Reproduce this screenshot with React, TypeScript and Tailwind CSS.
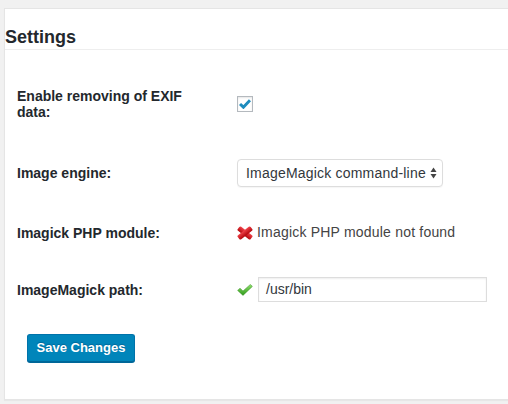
import React from 'react';

const font = { fontFamily: '"Liberation Sans", Arial, sans-serif' };

function CheckMark() {
  return (
    <svg width="12" height="10" viewBox="0 0 12 10" className="block">
      <path d="M1 5 L4.4 8.2 L11 1.2" fill="none" stroke="#1e8cbe" strokeWidth="3" strokeLinejoin="miter" />
    </svg>
  );
}

function RedCross() {
  return (
    <svg width="16" height="14" viewBox="0 0 16 14" className="block">
      <defs>
        <linearGradient id="rc" x1="0" y1="0" x2="0" y2="1">
          <stop offset="0" stopColor="#f0434a" />
          <stop offset="1" stopColor="#b3060c" />
        </linearGradient>
      </defs>
      <g transform="translate(8 7)">
        <rect x="-8.2" y="-2.6" width="16.4" height="5.2" rx="1.4" fill="url(#rc)" transform="rotate(38)" />
        <rect x="-8.2" y="-2.6" width="16.4" height="5.2" rx="1.4" fill="url(#rc)" transform="rotate(-38)" />
      </g>
    </svg>
  );
}

function GreenCheck() {
  return (
    <svg width="16" height="12" viewBox="0 0 16 12" className="block">
      <defs>
        <linearGradient id="gc" x1="0" y1="0" x2="0" y2="1">
          <stop offset="0" stopColor="#8fe06a" />
          <stop offset="1" stopColor="#2f9a1c" />
        </linearGradient>
      </defs>
      <path d="M0.6 6.4 L3 4.2 L6 7 L13.4 0.4 L15.4 2.4 L6 11.4 Z" fill="url(#gc)" stroke="#3a8f26" strokeWidth="0.5" />
    </svg>
  );
}

function Row({ label, height, children }: { label: React.ReactNode; height: string; children: React.ReactNode }) {
  return (
    <div className={`flex items-center pl-[12px] ${height}`}>
      <div className="w-[220px] pr-[28px] text-[14px] leading-[16px] font-bold text-[#23282d]">{label}</div>
      <div className="flex items-center text-[14px] text-[#444]">{children}</div>
    </div>
  );
}

export default function App() {
  return (
    <div className="min-h-[404px] w-[508px] overflow-hidden bg-[#f1f1f1] pt-[8px]" style={font}>
      <div className="ml-[4px] h-[392px] border border-r-0 border-[#e5e5e5] bg-white shadow-[0_1px_1px_rgba(0,0,0,0.04)]">
        <h2 className="border-b border-[#eee] pt-[17px] pb-[1px] text-[18px] leading-[22px] font-bold text-[#23282d]">
          Settings
        </h2>

        <div className="mt-[18px]">
          <Row label="Enable removing of EXIF data:" height="h-[72px]">
            <span className="flex h-[16px] w-[16px] items-center justify-center border border-[#b4b9be] bg-white shadow-[inset_0_1px_2px_rgba(0,0,0,0.1)]">
              <CheckMark />
            </span>
          </Row>

          <Row label="Image engine:" height="h-[66px]">
            <div className="flex h-[28px] w-[206px] items-center justify-between rounded-[4px] border border-[#ddd] bg-white pl-[8px] pr-[5px] text-[#32373c] tracking-[0.2px] shadow-[0_1px_1px_rgba(0,0,0,0.04)]">
              <span>ImageMagick command-line</span>
              <svg width="7" height="12" viewBox="0 0 7 12" className="block">
                <path d="M3.5 0.5 L6.5 5 L0.5 5 Z" fill="#444" />
                <path d="M3.5 11.5 L6.5 7 L0.5 7 Z" fill="#444" />
              </svg>
            </div>
          </Row>

          <Row label="Imagick PHP module:" height="h-[53px]">
            <span className="mr-[4px]">
              <RedCross />
            </span>
            <span className="tracking-[0.2px]">Imagick PHP module not found</span>
          </Row>

          <Row label="ImageMagick path:" height="h-[61px]">
            <span className="mr-[5px]">
              <GreenCheck />
            </span>
            <div className="flex h-[25px] w-[229px] items-center border border-[#ddd] bg-white pl-[7px] text-[#32373c] shadow-[inset_0_1px_2px_rgba(0,0,0,0.07)]">
              /usr/bin
            </div>
          </Row>
        </div>

        <button className="mt-[14px] ml-[22px] h-[28px] w-[108px] rounded-[3px] border border-[#0073aa] border-b-[#006799] bg-[#0085ba] text-[13px] font-bold text-white shadow-[0_1px_0_#006799] [text-shadow:0_-1px_1px_#006799]">
          Save Changes
        </button>
      </div>
    </div>
  );
}
